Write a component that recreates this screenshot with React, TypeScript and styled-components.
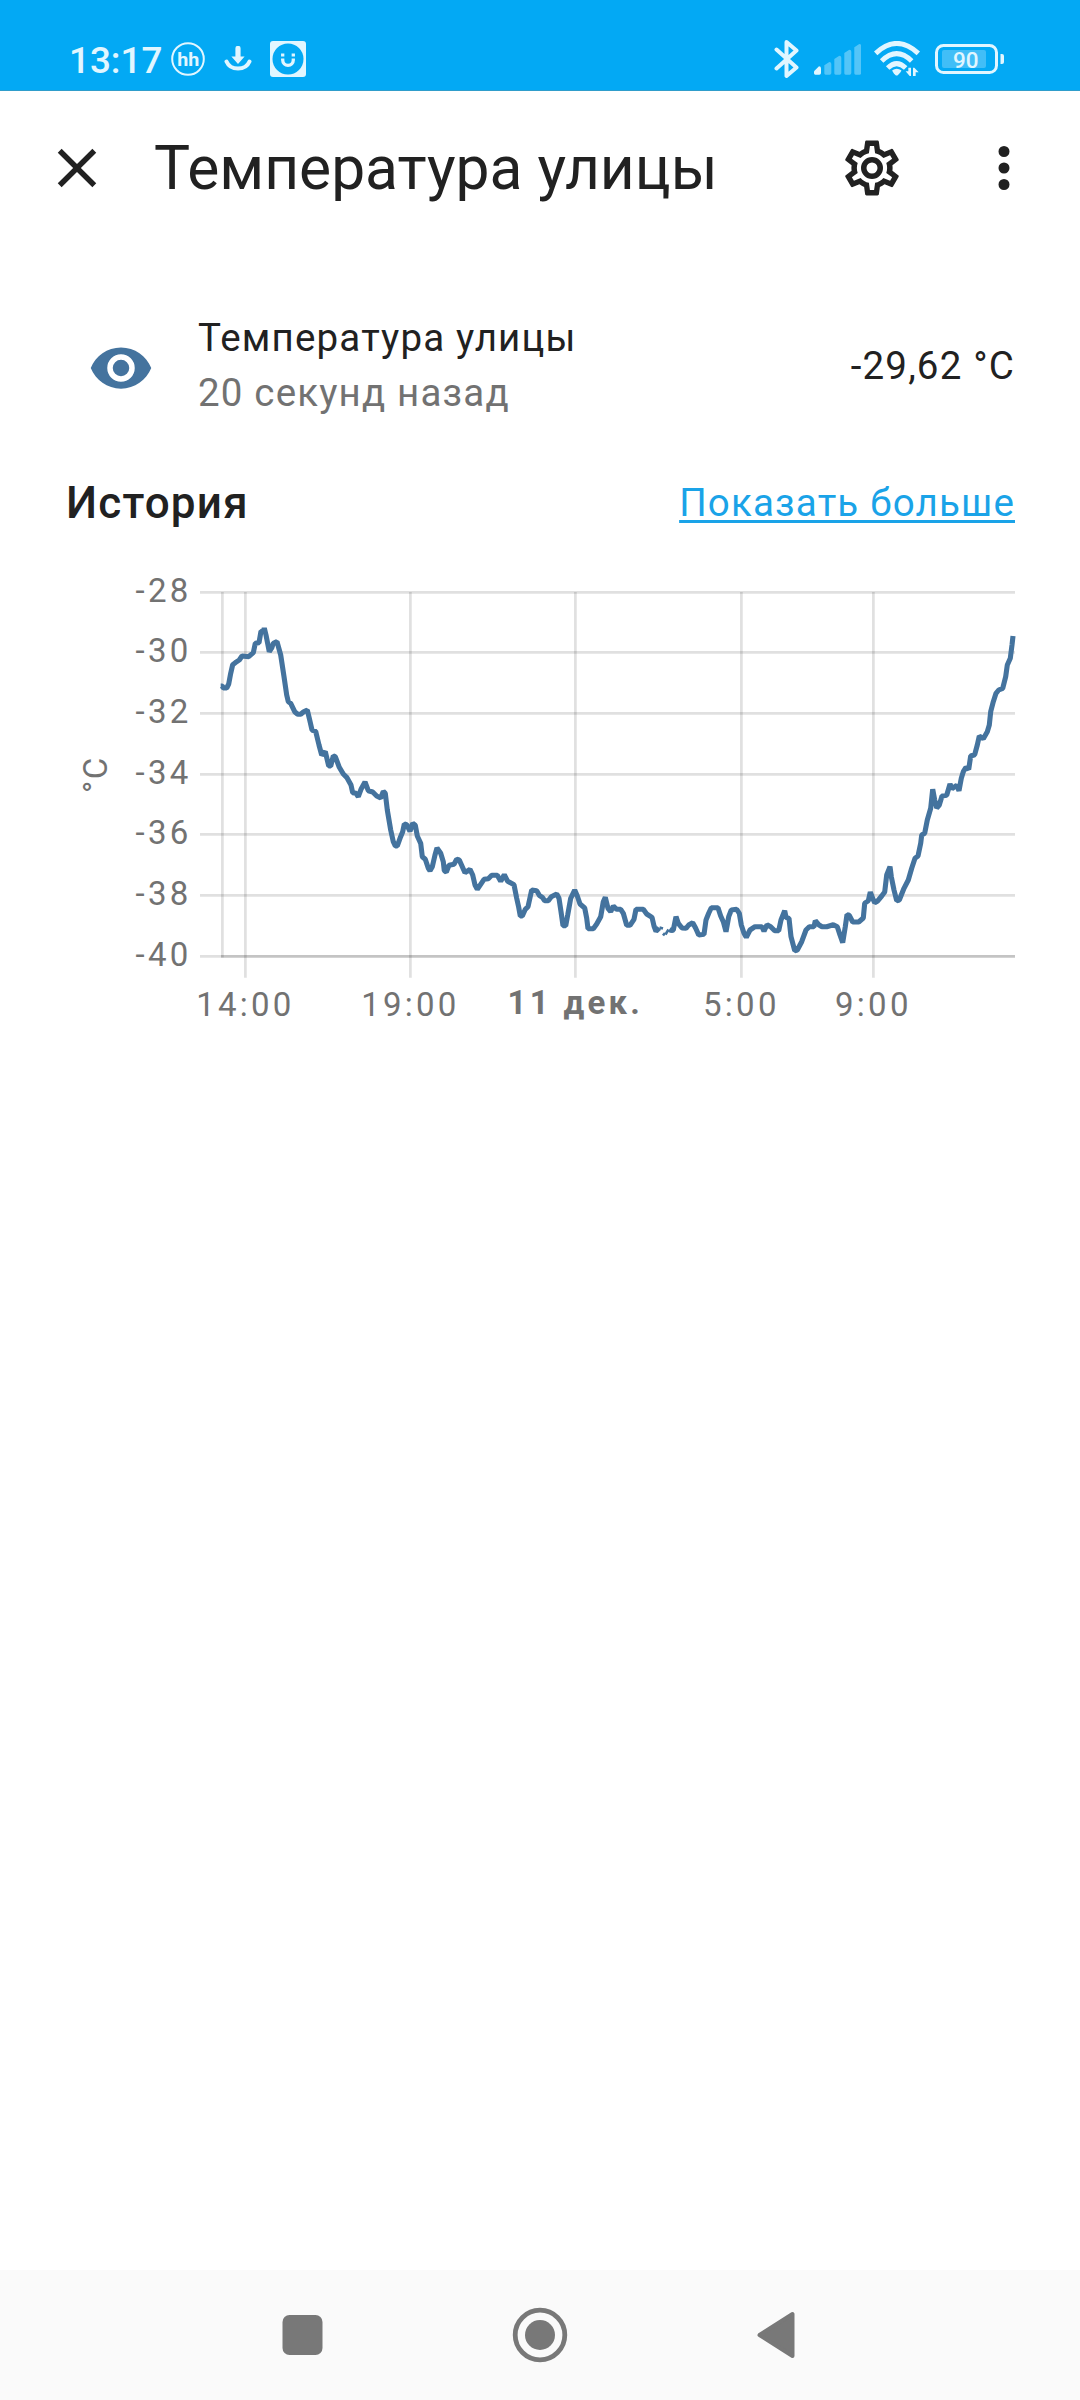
import React from "react";
import styled, { createGlobalStyle } from "styled-components";

const GlobalStyle = createGlobalStyle`
  html, body { margin: 0; background: #fff; }
  body { font-family: Roboto, "Noto Sans", sans-serif; color: #212121; }
`;

const Screen = styled.div`
  display: flex;
  flex-direction: column;
  width: 1080px;
  height: 2400px;
  overflow: hidden;
  background: #fff;
`;

const StatusBar = styled.header`
  box-sizing: border-box;
  display: flex;
  justify-content: space-between;
  height: 91px;
  padding: 28px 75px 0 69px;
  background: #03a9f4;
  border-bottom: 1px solid #2f9dcb;
  color: #e1f6ff;
`;

const StatusGroup = styled.div`
  display: flex;
  align-items: center;
  height: 62px;
`;

const Clock = styled.span`
  width: 102.4px;
  font-size: 36.8px;
  font-weight: 500;
  line-height: 64px;
  padding-top: 3px;
  white-space: nowrap;
`;

const Icon = styled.svg<{ $gap?: number; $drop?: number }>`
  display: block;
  flex: none;
  margin-left: ${(p) => p.$gap ?? 0}px;
  margin-top: ${(p) => p.$drop ?? 0}px;
`;

const Toolbar = styled.div`
  box-sizing: border-box;
  display: flex;
  align-items: center;
  height: 154px;
  padding: 0 43px 0 44px;
`;

const Title = styled.h1`
  flex: 1;
  margin: 0 0 0 44px;
  padding-top: 2px;
  font-size: 60.5px;
  font-weight: 400;
  line-height: 80px;
  white-space: nowrap;
`;

const Actions = styled.div`
  display: flex;
  gap: 66px;
`;

const EntityRow = styled.section`
  display: flex;
  align-items: center;
  height: 110px;
  padding: 0 65px 0 88px;
  margin-top: 65px;
  font-size: 38.5px;
  line-height: 55px;
  letter-spacing: 1.17px;
  white-space: nowrap;
`;

const EntityInfo = styled.div`
  flex: 1;
  margin-left: 44px;
`;

const EntityName = styled.div``;

const Muted = styled.div`
  color: #727272;
`;

const EntityState = styled.div``;

const HistoryRow = styled.section`
  display: flex;
  align-items: center;
  justify-content: space-between;
  height: 60px;
  margin-top: 53px;
  padding: 0 65px 0 66px;
  white-space: nowrap;
`;

const SectionTitle = styled.h2`
  margin: 0;
  font-size: 44px;
  font-weight: 500;
  line-height: 60px;
  letter-spacing: 1.2px;
`;

const MoreLink = styled.a`
  color: #1aa3e8;
  font-size: 38.5px;
  line-height: 60px;
  letter-spacing: 1.19px;
  text-decoration: underline;
  text-decoration-thickness: 3px;
  text-underline-offset: 3.5px;
  text-decoration-skip-ink: none;
`;

const Chart = styled.svg`
  display: block;
  flex: none;
  margin-top: 27px;
`;

const AxisLabel = styled.text<{ $strong?: boolean; $spacing?: number }>`
  fill: #727272;
  font-family: Roboto, "Noto Sans", sans-serif;
  font-size: 33px;
  font-weight: ${(p) => (p.$strong ? 700 : 400)};
  letter-spacing: ${(p) => p.$spacing ?? 3.25}px;
`;

const NavBar = styled.nav`
  box-sizing: border-box;
  display: flex;
  align-items: center;
  justify-content: space-between;
  height: 130px;
  margin-top: auto;
  padding: 0 284px 0 282px;
  background: #fafafa;
  color: #787878;
`;

type Point = [number, number];

const afternoon: Point[] = [
  [482,378],[487,378],[490,384],[500,384],[506,372],[512,340],[518,314],[526,308],[538,300],[546,288],[566,290],
  [580,278],[586,250],[597,248],[603,214],[611,214],[613,204],[618,225],[628,275],[636,262],[640,250],[651,245],
  [662,285],[672,350],[680,405],[685,425],[692,430],[704,455],[713,463],[722,463],[731,455],[742,450],[748,475],
  [756,510],[767,514],[777,555],[785,585],[796,575],[806,618],[812,618],[820,588],[826,590],[838,622],[850,642],
  [860,652],[873,675],[878,698],[888,700],[895,710],[903,688],[915,666],[925,692],[938,696],[950,708],[962,714],
  [970,694],[976,700],[982,750],
];

const evening: Point[] = [
  [32,30],[40,65],[46,78],[52,78],[60,55],[68,35],[73,12],[80,14],[90,34],[98,10],[106,16],[112,48],[122,70],
  [127,110],[136,118],[145,145],[150,152],[157,140],[165,105],[171,84],[182,100],[190,125],[193,152],[199,156],
  [207,136],[222,133],[230,118],[238,120],[247,140],[255,158],[270,148],[278,165],[285,195],[292,208],[300,196],
  [312,178],[325,176],[335,166],[352,166],[362,184],[373,164],[383,184],[402,194],[410,235],[416,262],[421,288],
  [427,288],[436,268],[444,260],[455,210],[470,212],[478,226],[487,232],[494,242],[505,242],[514,230],[530,222],
  [537,235],[543,275],[549,317],[557,317],[563,285],[572,235],[584,210],[592,228],[600,252],[614,264],[620,295],
  [624,326],[640,326],[650,312],[662,290],[670,245],[676,232],[684,265],[692,275],[700,258],[710,268],[722,268],
  [730,280],[740,316],[750,316],[762,298],[768,268],[790,268],[800,282],[816,292],[822,318],[828,334],[838,324],
];

const night: Point[] = [
  [868,328],[874,332],[880,330],[888,290],[895,310],[906,324],[918,325],[926,315],[938,308],[947,325],[956,345],
  [972,343],
];

const morning: Point[] = [
  [18,1080],[26,1060],[34,1043],[54,1043],[62,1068],[70,1085],[78,1115],[86,1070],[94,1050],[110,1048],[118,1060],
  [124,1095],[132,1120],[139,1132],[150,1110],[165,1100],[186,1100],[192,1114],[201,1094],[212,1100],[224,1112],
  [236,1112],[243,1080],[254,1052],[258,1072],[267,1075],[273,1130],[284,1172],[292,1170],[305,1145],[318,1110],
  [328,1100],[342,1100],[346,1082],[356,1094],[366,1100],[380,1100],[400,1094],[412,1100],[420,1125],[428,1148],
  [436,1100],[441,1064],[448,1066],[458,1086],[476,1086],[490,1074],[494,1030],[505,1022],[511,996],[516,1010],
  [524,1028],[532,1024],[545,1008],[554,996],[560,945],[570,920],[574,950],[582,990],[590,1022],[598,1020],
  [612,985],[625,960],[635,925],[645,895],[654,888],[662,850],[665,825],[674,820],[682,780],[692,745],[698,688],
  [704,720],[710,744],[718,735],[726,708],[740,706],[750,672],[756,686],[770,676],[777,692],[784,655],[790,635],
  [798,622],[806,628],[812,588],[824,584],[832,555],[838,528],[850,536],[862,515],[868,495],[872,455],[880,425],
  [888,400],[896,390],[908,385],[917,350],[922,315],[931,295],[936,255],[939,228],
];

const shift = (pts: Point[], dx: number, dy: number): Point[] => pts.map(([x, y]) => [x + dx, y + dy]);
const toLine = (pts: Point[]) => pts.map(([x, y]) => `${(x / 3 + 60).toFixed(1)},${(y / 3).toFixed(1)}`).join(" ");

const beforeGap = toLine([...afternoon, ...shift(evening, 960, 780)]);
const afterGap = toLine([...shift(night, 960, 780), ...shift(morning, 1920, 0)]);

const yTicks = [
  { label: "-28", y: 32.4 },
  { label: "-30", y: 92.4 },
  { label: "-32", y: 153.4 },
  { label: "-34", y: 214.4 },
  { label: "-36", y: 274.4 },
  { label: "-38", y: 335.4 },
  { label: "-40", y: 396.4 },
];

const xTicks = [
  { label: "14:00", x: 245.4 },
  { label: "19:00", x: 410.4 },
  { label: "11 дек.", x: 575.4, strong: true },
  { label: "5:00", x: 741.4 },
  { label: "9:00", x: 873.4 },
];

const signalBars = [
  { x: 0, top: 67, on: true },
  { x: 31, top: 54 },
  { x: 61, top: 35 },
  { x: 91, top: 17 },
  { x: 121, top: 0 },
];

function MdiIcon({ path, color, drop }: { path: string; color?: string; drop?: number }) {
  return (
    <Icon width="66" height="66" viewBox="0 0 24 24" fill={color ?? "#212121"} $drop={drop}>
      <path d={path} />
    </Icon>
  );
}

function HistoryChart() {
  return (
    <Chart width="1080" height="480" viewBox="0 0 1080 480">
      <g stroke="#000" strokeOpacity="0.12" strokeWidth="2.75">
        {yTicks.map((t) => (
          <line key={t.label} x1="200" x2="1015" y1={t.y} y2={t.y} />
        ))}
        <line x1="222.4" x2="222.4" y1="32" y2="397.5" />
        {xTicks.map((t) => (
          <line key={t.label} x1={t.x} x2={t.x} y1="32" y2="417.8" />
        ))}
        <line x1="221" x2="1015" y1="396.4" y2="396.4" />
      </g>
      {yTicks.map((t) => (
        <AxisLabel key={t.label} x="191.5" y={t.y + 9.4} textAnchor="end">
          {t.label}
        </AxisLabel>
      ))}
      {xTicks.map((t) => (
        <AxisLabel key={t.label} x={t.x} y={t.strong ? 454 : 455.6} textAnchor="middle" $strong={t.strong}>
          {t.label}
        </AxisLabel>
      ))}
      <AxisLabel transform="translate(106.8 233) rotate(-90)" $spacing={1.4}>
        °C
      </AxisLabel>
      <g fill="none" stroke="#44739e" strokeWidth="5.1" strokeLinejoin="bevel">
        <polyline points={beforeGap} />
        <polyline points={afterGap} />
        <path d="M659.5 367.5l3.5 1M663 375.5l2-2.500M665.500 374.500l3-5" strokeWidth="2.6" />
      </g>
    </Chart>
  );
}

export default function App() {
  return (
    <Screen>
      <GlobalStyle />
      <StatusBar>
        <StatusGroup>
          <Clock>13:17</Clock>
          <Icon width="34" height="34" viewBox="0 0 34 34">
            <circle cx="17" cy="17" r="15.8" fill="none" stroke="currentColor" strokeWidth="2" />
            <text
              x="6.2"
              y="23.6"
              fill="currentColor"
              fontFamily="Roboto, sans-serif"
              fontSize="18.5"
              fontWeight="700"
              textLength="22"
              lengthAdjust="spacingAndGlyphs"
            >
              hh
            </text>
          </Icon>
          <Icon width="28" height="26" viewBox="0 0 28 26" $gap={19}>
            <path d="M11.400 2.400a2.600 2.600 0 0 1 5.200 0v8.100h4L14 18 7.400 10.500h4z" fill="currentColor" />
            <path d="M2.500 15.500Q5.500 22.600 14 22.600T25.500 15.500" fill="none" stroke="currentColor" strokeWidth="4" strokeLinecap="round" />
          </Icon>
          <Icon width="36" height="36" viewBox="0 0 36 36" $gap={18}>
            <rect width="36" height="36" rx="3" fill="currentColor" />
            <circle cx="18" cy="18" r="15.500" fill="#03a9f4" />
            <path d="M12.700 12.500v3M23.300 12.500v3M12.700 17.500v1.500a5.300 5.300 0 0 0 10.600 0v-1.500" fill="none" stroke="currentColor" strokeWidth="3.300" />
          </Icon>
        </StatusGroup>
        <StatusGroup>
          <Icon width="26" height="40" viewBox="0 0 26 40">
            <path
              d="M2.500 10.500L22.500 28.500 12.500 37V3L22.500 11.500 2.500 29.500"
              fill="none"
              stroke="currentColor"
              strokeWidth="4"
              strokeLinejoin="round"
              strokeLinecap="round"
            />
          </Icon>
          <Icon width="47.300" height="31" viewBox="0 0 142 93" $gap={14}>
            {signalBars.map((b) => (
              <path
                key={b.x}
                d={`M${b.x} ${b.on ? 82 : b.top + 10}L${b.x + 15} ${b.top}q6 0 6 6V87q0 5 -5 5H${b.x + 4}q-4 0 -4 -4z`}
                fill="currentColor"
                opacity={b.on ? 1 : 0.37}
              />
            ))}
          </Icon>
          <Icon width="46" height="36" viewBox="0 0 138 108" $gap={13}>
            <g fill="none" stroke="currentColor" strokeWidth="15">
              <path d="M5 37Q68 -22 133 37" />
              <path d="M23 60Q68 16 113 60" />
              <path d="M41 81Q68 55 95 81" />
            </g>
            <path d="M55 88q13 -10 27 0q1 3 -10 14q-4 3 -8 0q-10 -10 -9 -14z" fill="currentColor" />
            <path d="M103 80h8v25h-4L95 91h8zM117 105V80h4l13 14h-9v11z" fill="currentColor" />
          </Icon>
          <Icon width="70" height="30" viewBox="0 0 70 30" $gap={15}>
            <rect x="1.500" y="1.500" width="60" height="27" rx="7" fill="none" stroke="currentColor" strokeWidth="3" />
            <rect x="7" y="6" width="44" height="18" rx="2" fill="currentColor" opacity="0.28" />
            <path d="M65.500 10h1.500q2 0 2 2v6q0 2 -2 2h-1.500z" fill="currentColor" />
            <text x="18" y="24" fill="currentColor" fontFamily="Roboto, sans-serif" fontSize="22.500" fontWeight="500">
              90
            </text>
          </Icon>
        </StatusGroup>
      </StatusBar>

      <Toolbar>
        <MdiIcon path="M19,6.41L17.59,5L12,10.59L6.41,5L5,6.41L10.59,12L5,17.59L6.41,19L12,13.41L17.59,19L19,17.59L13.41,12L19,6.41Z" />
        <Title>Температура улицы</Title>
        <Actions>
          <MdiIcon path="M12,8A4,4 0 0,1 16,12A4,4 0 0,1 12,16A4,4 0 0,1 8,12A4,4 0 0,1 12,8M12,10A2,2 0 0,0 10,12A2,2 0 0,0 12,14A2,2 0 0,0 14,12A2,2 0 0,0 12,10M10,22C9.75,22 9.54,21.82 9.5,21.58L9.13,18.93C8.5,18.68 7.96,18.34 7.44,17.94L4.95,18.95C4.73,19.03 4.46,18.95 4.34,18.73L2.34,15.27C2.21,15.05 2.27,14.78 2.46,14.63L4.57,12.97L4.5,12L4.57,11L2.46,9.37C2.27,9.22 2.21,8.95 2.34,8.73L4.34,5.27C4.46,5.05 4.73,4.96 4.95,5.05L7.44,6.05C7.96,5.66 8.5,5.32 9.13,5.07L9.5,2.42C9.54,2.18 9.75,2 10,2H14C14.25,2 14.46,2.18 14.5,2.42L14.87,5.07C15.5,5.32 16.04,5.66 16.56,6.05L19.05,5.05C19.27,4.96 19.54,5.05 19.66,5.27L21.66,8.73C21.79,8.95 21.73,9.22 21.54,9.37L19.43,11L19.5,12L19.43,13L21.54,14.63C21.73,14.78 21.79,15.05 21.66,15.27L19.66,18.73C19.54,18.95 19.27,19.04 19.05,18.95L16.56,17.95C16.04,18.34 15.5,18.68 14.87,18.93L14.5,21.58C14.46,21.82 14.25,22 14,22H10M11.25,4L10.88,6.61C9.68,6.86 8.62,7.5 7.85,8.39L5.44,7.35L4.69,8.65L6.8,10.2C6.4,11.37 6.4,12.64 6.8,13.8L4.68,15.36L5.43,16.66L7.86,15.62C8.63,16.5 9.68,17.14 10.87,17.38L11.24,20H12.76L13.13,17.39C14.32,17.14 15.37,16.5 16.14,15.62L18.57,16.66L19.32,15.36L17.2,13.81C17.6,12.64 17.6,11.37 17.2,10.2L19.31,8.65L18.56,7.35L16.15,8.39C15.38,7.5 14.32,6.86 13.12,6.62L12.75,4H11.25Z" />
          <MdiIcon path="M12,16A2,2 0 0,1 14,18A2,2 0 0,1 12,20A2,2 0 0,1 10,18A2,2 0 0,1 12,16M12,10A2,2 0 0,1 14,12A2,2 0 0,1 12,14A2,2 0 0,1 10,12A2,2 0 0,1 12,10M12,4A2,2 0 0,1 14,6A2,2 0 0,1 12,8A2,2 0 0,1 10,6A2,2 0 0,1 12,4Z" />
        </Actions>
      </Toolbar>

      <EntityRow>
        <MdiIcon
          drop={5}
          color="#44739e"
          path="M12,9A3,3 0 0,0 9,12A3,3 0 0,0 12,15A3,3 0 0,0 15,12A3,3 0 0,0 12,9M12,17A5,5 0 0,1 7,12A5,5 0 0,1 12,7A5,5 0 0,1 17,12A5,5 0 0,1 12,17M12,4.5C7,4.5 2.73,7.61 1,12C2.73,16.39 7,19.5 12,19.5C17,19.5 21.27,16.39 23,12C21.27,7.61 17,4.5 12,4.5Z"
        />
        <EntityInfo>
          <EntityName>Температура улицы</EntityName>
          <Muted>20 секунд назад</Muted>
        </EntityInfo>
        <EntityState>-29,62 °C</EntityState>
      </EntityRow>

      <HistoryRow>
        <SectionTitle>История</SectionTitle>
        <MoreLink>Показать больше</MoreLink>
      </HistoryRow>

      <HistoryChart />

      <NavBar>
        <Icon width="41" height="40" viewBox="0 0 41 40">
          <rect x="0.500" width="40" height="40" rx="7" fill="currentColor" />
        </Icon>
        <Icon width="56" height="56" viewBox="0 0 56 56">
          <circle cx="28" cy="28" r="24.800" fill="none" stroke="currentColor" strokeWidth="4.800" />
          <circle cx="28" cy="28" r="15" fill="currentColor" />
        </Icon>
        <Icon width="39" height="48" viewBox="0 0 39 48">
          <path d="M2.500 24L35.500 3V45z" fill="currentColor" stroke="currentColor" strokeWidth="4" strokeLinejoin="round" />
        </Icon>
      </NavBar>
    </Screen>
  );
}
